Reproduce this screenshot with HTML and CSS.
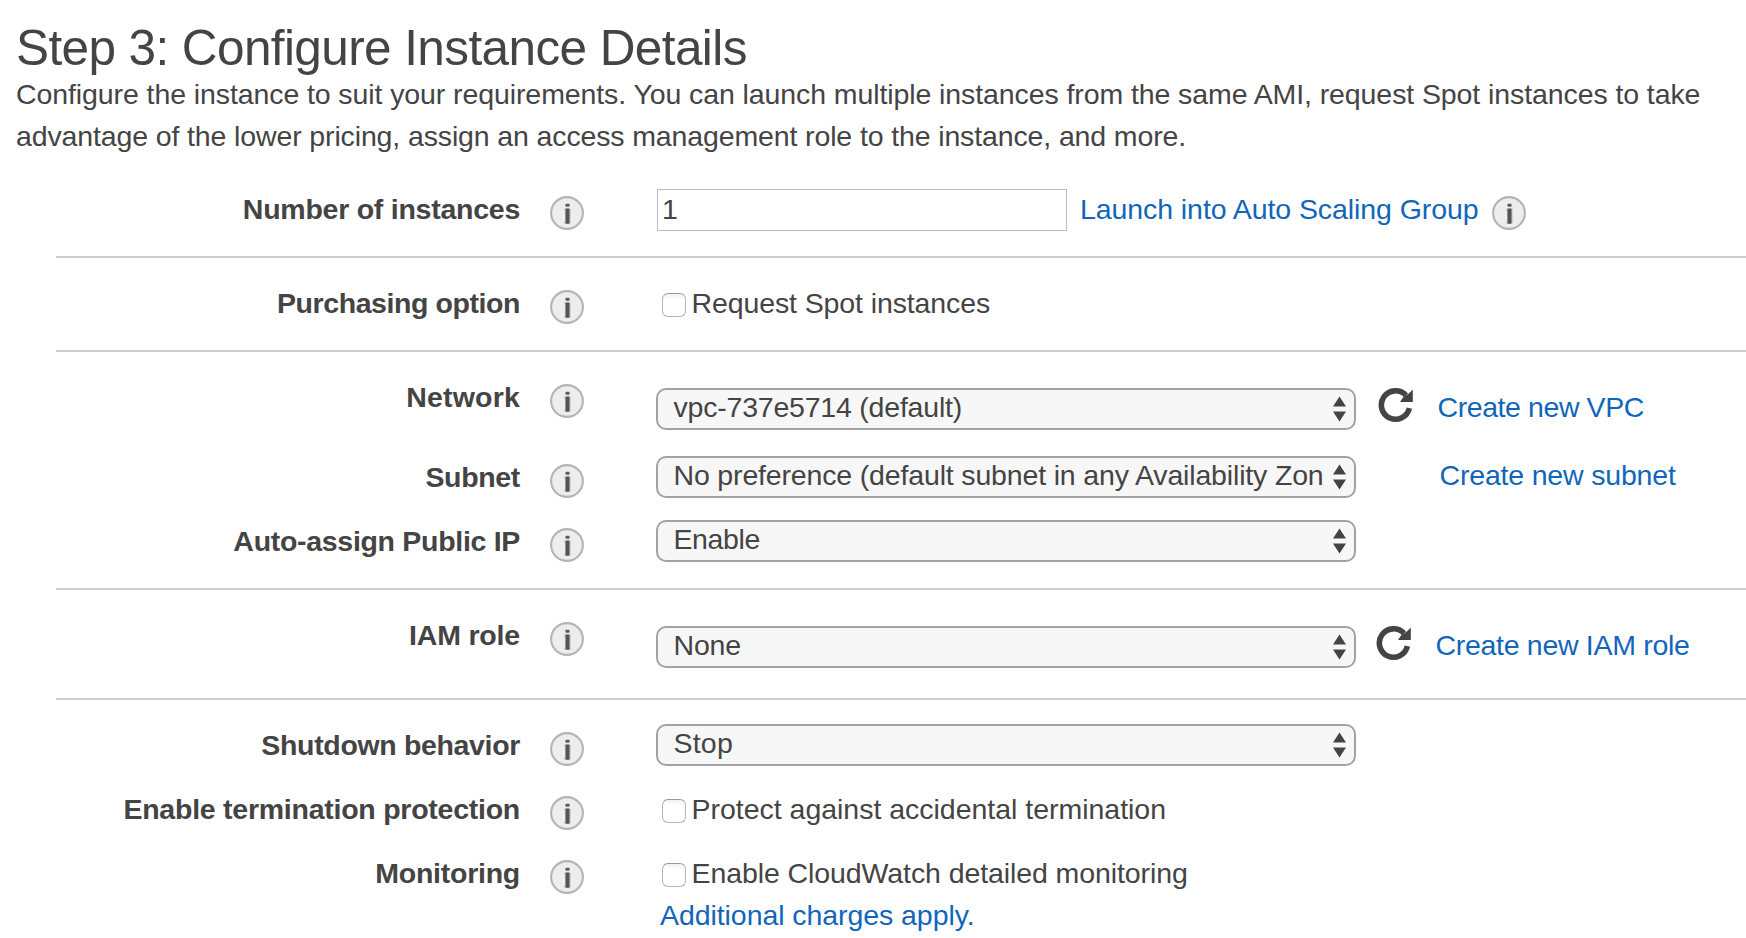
FILE: index.html
```html
<!DOCTYPE html>
<html lang="en">
<head>
<meta charset="utf-8">
<title>Step 3: Configure Instance Details</title>
<link rel="stylesheet" href="styles.css">
</head>
<body>
<svg class="defs" width="0" height="0" aria-hidden="true">
  <defs>
    <symbol id="info" viewBox="0 0 34 34">
      <circle cx="17" cy="17" r="15.9" fill="#ededed" stroke="#b4b4b4" stroke-width="2.1"/>
      <path d="M14.2 12.6 H20.6 V27.8 H14.2 V25.8 H15.4 V14.4 H14.2 Z" fill="#c4c4c4"/>
      <rect x="15.4" y="7.8" width="4.2" height="3" rx="1" fill="#5a5a5a"/>
      <rect x="15.5" y="12.6" width="4" height="15.2" rx=".8" fill="#555"/>
    </symbol>
    <symbol id="refresh" viewBox="0 0 36 36">
      <path d="M31.4 21.2 A14.2 14.2 0 1 1 28 8.4" fill="none" stroke="#444" stroke-width="5.6"/>
      <path d="M34.8 2.6 V15 H22 L25 10.4 L30.6 6.8 Z" fill="#444"/>
    </symbol>
    <symbol id="arrows" viewBox="0 0 13 26">
      <path d="M6.5 0.4 L13 10.6 H0 Z M0 15.4 H13 L6.5 25.6 Z" fill="#444"/>
    </symbol>
  </defs>
</svg>
<header class="header">
  <h1 class="title">Step 3: Configure Instance Details</h1>
  <p class="intro"><span class="intro-a">Configure the instance to suit your requirements. You can launch multiple instances from the same AMI, request Spot instances to take</span><br><span class="intro-b">advantage of the lower pricing, assign an access management role to the instance, and more.</span></p>
</header>
<main class="form">
  <section class="group">
    <div class="row">
      <span class="label l-num">Number of instances</span>
      <svg class="info"><use href="#info"/></svg>
      <div class="control">
        <div class="input">1</div>
        <a class="link scaling">Launch into Auto Scaling Group</a>
        <svg class="info info-inline"><use href="#info"/></svg>
      </div>
    </div>
  </section>
  <section class="group">
    <div class="row">
      <span class="label l-pur">Purchasing option</span>
      <svg class="info"><use href="#info"/></svg>
      <div class="control">
        <span class="checkbox"></span><span class="check-text c-spot">Request Spot instances</span>
      </div>
    </div>
  </section>
  <section class="group">
    <div class="row tall">
      <span class="label l-net">Network</span>
      <svg class="info"><use href="#info"/></svg>
      <div class="control low">
        <div class="select"><span class="value v-vpc">vpc-737e5714 (default)</span><svg class="arrows"><use href="#arrows"/></svg></div>
        <svg class="refresh r-vpc"><use href="#refresh"/></svg>
        <a class="link create k-vpc">Create new VPC</a>
      </div>
    </div>
    <div class="row mid">
      <span class="label l-sub">Subnet</span>
      <svg class="info"><use href="#info"/></svg>
      <div class="control high">
        <div class="select"><span class="value v-sub">No preference (default subnet in any Availability Zon</span><svg class="arrows"><use href="#arrows"/></svg></div>
        <a class="link create k-sub">Create new subnet</a>
      </div>
    </div>
    <div class="row">
      <span class="label l-ip">Auto-assign Public IP</span>
      <svg class="info"><use href="#info"/></svg>
      <div class="control high">
        <div class="select"><span class="value v-en">Enable</span><svg class="arrows"><use href="#arrows"/></svg></div>
      </div>
    </div>
  </section>
  <section class="group">
    <div class="row iam">
      <span class="label l-iam">IAM role</span>
      <svg class="info"><use href="#info"/></svg>
      <div class="control low">
        <div class="select"><span class="value v-none">None</span><svg class="arrows"><use href="#arrows"/></svg></div>
        <svg class="refresh r-iam"><use href="#refresh"/></svg>
        <a class="link create k-iam">Create new IAM role</a>
      </div>
    </div>
  </section>
  <section class="group">
    <div class="row mid">
      <span class="label l-shut">Shutdown behavior</span>
      <svg class="info"><use href="#info"/></svg>
      <div class="control high">
        <div class="select"><span class="value v-stop">Stop</span><svg class="arrows"><use href="#arrows"/></svg></div>
      </div>
    </div>
    <div class="row mid">
      <span class="label l-term">Enable termination protection</span>
      <svg class="info"><use href="#info"/></svg>
      <div class="control">
        <span class="checkbox"></span><span class="check-text c-prot">Protect against accidental termination</span>
      </div>
    </div>
    <div class="row">
      <span class="label l-mon">Monitoring</span>
      <svg class="info"><use href="#info"/></svg>
      <div class="control stacked">
        <div class="line"><span class="checkbox"></span><span class="check-text c-cw">Enable CloudWatch detailed monitoring</span></div>
        <a class="link charges">Additional charges apply.</a>
      </div>
    </div>
  </section>
</main>
</body>
</html>
```
FILE: styles.css
```css
* { box-sizing: border-box; }
body {
  margin: 0;
  width: 1746px;
  height: 938px;
  overflow: hidden;
  background: #fff;
  color: #444;
  font-family: "Liberation Sans", Arial, sans-serif;
  font-size: 28.5px;
  line-height: 42px;
  white-space: nowrap;
}
.defs { display: block; }
.header { height: 164px; padding: 22px 0 0 16px; }
.title { margin: 0 0 -1px; font-size: 49.5px; line-height: 52px; font-weight: 400; letter-spacing: -.6px; }
.intro { margin: 0; }
.form { padding-left: 56px; line-height: 40px; }
.group { padding: 25px 0; border-bottom: 2px solid #ccc; }
.group:last-child { border-bottom: 0; padding-bottom: 0; }
.row { display: grid; grid-template-columns: 464px 80px 1fr; height: 42px; align-items: start; }
.row.tall { height: 80px; }
.row.mid { height: 64px; }
.row.iam { height: 58px; }
.label { font-weight: 700; justify-self: end; }
.info { width: 34px; height: 34px; margin: 6.5px 0 0 30px; }
.info-inline { margin: 6.5px 0 0 14px; }
.control { display: flex; align-items: flex-start; }
.low { margin-top: 11px; }
.high { margin-top: -1px; }
.stacked { flex-direction: column; }
.line { display: flex; height: 42px; }
.input { width: 410px; height: 42px; margin-left: 57px; border: 1px solid #bbb; padding-left: 4px; line-height: 38px; }
.link { color: #1166bb; }
.scaling { margin-left: 13px; }
.checkbox { width: 24px; height: 24px; margin: 10px 0 0 62px; border: 1px solid #b5b5b5; border-top-color: #999; border-radius: 6px; background: linear-gradient(#f1f1f1, #fff 25%); }
.check-text { margin-left: 5.5px; }
.select { display: flex; justify-content: space-between; width: 700px; height: 42px; margin-left: 56px; padding: 0 8px 0 15.5px; border: 2px solid #a3a3a3; border-radius: 10px; background: #f7f7f7; }
.value { width: 655px; flex: none; line-height: 34px; }
.arrows { width: 13px; height: 26px; margin-top: 6px; }
.refresh { flex: none; width: 36px; height: 36px; margin-top: -1px; }
.r-vpc { margin-left: 22px; }
.r-iam { margin-left: 20px; }
.create { line-height: 38px; margin-left: 23.5px; }
.k-sub { margin-left: 83.5px; }
.charges { margin-left: 60px; }

/* tracking */
.intro-a { letter-spacing: -.093px; }
.intro-b { letter-spacing: -.13px; }
.scaling { letter-spacing: -.08px; }
.c-spot { letter-spacing: -.11px; }
.v-vpc { letter-spacing: -.21px; }
.v-sub { letter-spacing: -.16px; }
.v-en { letter-spacing: -.4px; }
.v-none { letter-spacing: -.2px; }
.v-stop { letter-spacing: .2px; }
.k-vpc { letter-spacing: -.42px; }
.k-sub { letter-spacing: -.18px; }
.k-iam { letter-spacing: -.3px; }
.c-prot { letter-spacing: -.02px; }
.c-cw { letter-spacing: -.09px; }
.charges { letter-spacing: -.07px; }
.l-num, .l-term, .l-mon { letter-spacing: -.25px; }
.l-pur { letter-spacing: -.42px; }
.l-net { letter-spacing: .2px; }
.l-sub, .l-shut { letter-spacing: -.34px; }
.l-ip { letter-spacing: -.3px; }
.l-iam { letter-spacing: -.18px; }
```
